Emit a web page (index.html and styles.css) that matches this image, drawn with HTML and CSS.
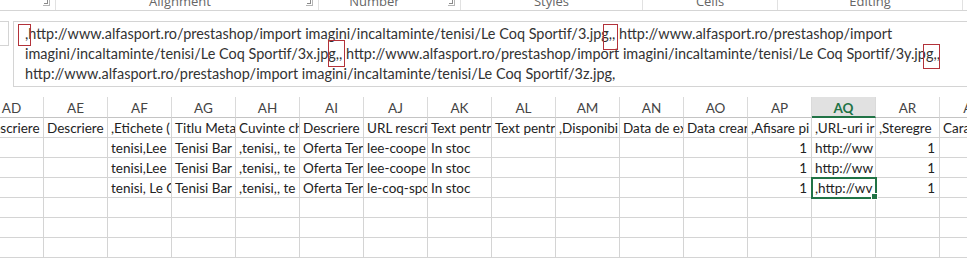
FILE: index.html
```html
<!DOCTYPE html>
<html lang="en">
<head>
  <meta charset="UTF-8">
  <title>Book1 - Excel</title>
  <link rel="stylesheet" href="styles.css">
</head>
<body>
  <div class="ribbon">
    <div class="group g-first"><span class="launcher"></span></div>
    <div class="group g-align"><span class="group-label">Alignment</span><span class="launcher"></span></div>
    <div class="group g-number"><span class="group-label">Number</span><span class="launcher"></span></div>
    <div class="group g-styles"><span class="group-label">Styles</span></div>
    <div class="group g-cells"><span class="group-label">Cells</span></div>
    <div class="group g-editing"><span class="group-label">Editing</span></div>
  </div>

  <div class="formula-row">
    <div class="name-box"></div>
    <div class="formula-bar">
      <div class="formula-text">,http://www.alfasport.ro/prestashop/import imagini/incaltaminte/tenisi/Le Coq Sportif/3.jpg,, http://www.alfasport.ro/prestashop/import<br>imagini/incaltaminte/tenisi/Le Coq Sportif/3x.jpg,, http://www.alfasport.ro/prestashop/import imagini/incaltaminte/tenisi/Le Coq Sportif/3y.jpg,,<br>http://www.alfasport.ro/prestashop/import imagini/incaltaminte/tenisi/Le Coq Sportif/3z.jpg,</div>
      <span class="mark mark-1"></span>
      <span class="mark mark-2"></span>
      <span class="mark mark-3"></span>
      <span class="mark mark-4"></span>
    </div>
  </div>

  <div class="sheet">
    <div class="grid">
      <div class="head">AD</div><div class="head">AE</div><div class="head">AF</div><div class="head">AG</div>
      <div class="head">AH</div><div class="head">AI</div><div class="head">AJ</div><div class="head">AK</div>
      <div class="head">AL</div><div class="head">AM</div><div class="head">AN</div><div class="head">AO</div>
      <div class="head">AP</div><div class="head active">AQ</div><div class="head">AR</div><div class="head">AS</div>

      <div class="cell">Descriere</div><div class="cell">Descriere</div><div class="cell">,Etichete (</div><div class="cell">Titlu Meta</div>
      <div class="cell">Cuvinte ch</div><div class="cell">Descriere</div><div class="cell">URL rescri</div><div class="cell">Text pentr</div>
      <div class="cell">Text pentr</div><div class="cell">,Disponibi</div><div class="cell">Data de ex</div><div class="cell">Data crear</div>
      <div class="cell">,Afisare pi</div><div class="cell">,URL-uri ir</div><div class="cell">,Steregre</div><div class="cell">Cara</div>

      <div class="cell"></div><div class="cell"></div><div class="cell">tenisi,Lee</div><div class="cell">Tenisi Bar</div>
      <div class="cell">,tenisi,, te</div><div class="cell">Oferta Ter</div><div class="cell">lee-coope</div><div class="cell">In stoc</div>
      <div class="cell"></div><div class="cell"></div><div class="cell"></div><div class="cell"></div>
      <div class="cell num">1</div><div class="cell">http://ww</div><div class="cell num">1</div><div class="cell"></div>

      <div class="cell"></div><div class="cell"></div><div class="cell">tenisi,Lee</div><div class="cell">Tenisi Bar</div>
      <div class="cell">,tenisi,, te</div><div class="cell">Oferta Ter</div><div class="cell">lee-coope</div><div class="cell">In stoc</div>
      <div class="cell"></div><div class="cell"></div><div class="cell"></div><div class="cell"></div>
      <div class="cell num">1</div><div class="cell">http://ww</div><div class="cell num">1</div><div class="cell"></div>

      <div class="cell"></div><div class="cell"></div><div class="cell">tenisi, Le C</div><div class="cell">Tenisi Bar</div>
      <div class="cell">,tenisi,, te</div><div class="cell">Oferta Ter</div><div class="cell">le-coq-spo</div><div class="cell">In stoc</div>
      <div class="cell"></div><div class="cell"></div><div class="cell"></div><div class="cell"></div>
      <div class="cell num">1</div><div class="cell selected">,http://wv</div><div class="cell num">1</div><div class="cell"></div>

      <div class="cell"></div><div class="cell"></div><div class="cell"></div><div class="cell"></div>
      <div class="cell"></div><div class="cell"></div><div class="cell"></div><div class="cell"></div>
      <div class="cell"></div><div class="cell"></div><div class="cell"></div><div class="cell"></div>
      <div class="cell"></div><div class="cell"></div><div class="cell"></div><div class="cell"></div>

      <div class="cell"></div><div class="cell"></div><div class="cell"></div><div class="cell"></div>
      <div class="cell"></div><div class="cell"></div><div class="cell"></div><div class="cell"></div>
      <div class="cell"></div><div class="cell"></div><div class="cell"></div><div class="cell"></div>
      <div class="cell"></div><div class="cell"></div><div class="cell"></div><div class="cell"></div>

      <div class="cell"></div><div class="cell"></div><div class="cell"></div><div class="cell"></div>
      <div class="cell"></div><div class="cell"></div><div class="cell"></div><div class="cell"></div>
      <div class="cell"></div><div class="cell"></div><div class="cell"></div><div class="cell"></div>
      <div class="cell"></div><div class="cell"></div><div class="cell"></div><div class="cell"></div>
    </div>
  </div>
</body>
</html>
```

FILE: styles.css
```css
html, body {
  margin: 0;
  padding: 0;
  overflow: hidden;
  background-color: #ffffff;
}

body {
  width: 967px;
  height: 263px;
  font-family: 'Lato', 'Open Sans', sans-serif;
}

/* ribbon, only its bottom edge is visible */
.ribbon {
  display: flex;
  height: 10px;
  border-bottom: 1px solid #d5d5d5;
  overflow: hidden;
  background-color: #ffffff;
}

.group {
  position: relative;
  display: flex;
  justify-content: center;
  border-right: 1px solid #e1e1e1;
  box-sizing: border-box;
  height: 10px;
}

.g-first { width: 56px; }
.g-align { width: 263px; padding-right: 14px; }
.g-number { width: 142px; padding-right: 30px; }
.g-styles { width: 182px; }
.g-cells { width: 135px; }
.g-editing { width: 185px; }

.group-label {
  font-family: 'Open Sans', sans-serif;
  font-size: 13px;
  line-height: 13px;
  margin-top: -5px;
  color: #666666;
  white-space: nowrap;
}

.launcher {
  position: absolute;
  right: 5px;
  top: 0;
  width: 6px;
  height: 5px;
  border-right: 1px solid #b5b5b5;
  border-bottom: 1px solid #b5b5b5;
}

.launcher::after {
  content: '';
  position: absolute;
  right: 1px;
  bottom: 1px;
  width: 3px;
  height: 3px;
  border-right: 1px solid #8a8a8a;
  border-bottom: 1px solid #8a8a8a;
}

/* formula bar */
.formula-row {
  display: flex;
  margin-top: 10px;
}

.name-box {
  width: 9px;
  height: 25px;
  border: 1px solid #d4d4d4;
  border-left: none;
  box-sizing: border-box;
}

.formula-bar {
  position: relative;
  flex: 1;
  height: 66px;
  margin-left: 4px;
  border: 1px solid #d4d4d4;
  border-right: none;
  box-sizing: border-box;
  padding: 2px 0 0 11px;
  overflow: hidden;
}

.formula-text {
  font-family: 'Lato', sans-serif;
  font-size: 14.45px;
  line-height: 20px;
  color: #333333;
  white-space: nowrap;
}

.mark {
  position: absolute;
  border: 1px solid #b3323a;
  box-sizing: border-box;
}

.mark-1 { left: 4px; top: 2px; width: 13px; height: 22px; }
.mark-2 { left: 314px; top: 18px; width: 17px; height: 27px; }
.mark-3 { left: 589px; top: 2px; width: 15px; height: 26px; }
.mark-4 { left: 909px; top: 22px; width: 17px; height: 25px; }

/* worksheet */
.sheet {
  margin-top: 10px;
  margin-left: -20px;
}

.grid {
  display: grid;
  grid-template-columns: repeat(16, 64px);
  grid-template-rows: 21px repeat(7, 20px);
  font-size: 13.5px;
  color: #222222;
}

.head {
  display: flex;
  align-items: center;
  justify-content: center;
  border-right: 1px solid #dadada;
  border-bottom: 1px solid #c4c4c4;
  box-sizing: border-box;
  color: #444444;
  padding-top: 1px;
}

.head.active {
  background-color: #e1e1e1;
  color: #217346;
  font-weight: bold;
  border-bottom: 2px solid #217346;
  padding-top: 2px;
}

.cell {
  position: relative;
  border-right: 1px solid #d4d4d4;
  border-bottom: 1px solid #d4d4d4;
  box-sizing: border-box;
  padding: 1px 0 0 3px;
  line-height: 18px;
  white-space: nowrap;
  overflow: hidden;
}

.cell.num {
  text-align: right;
  padding: 1px 4px 0 0;
}

.cell.selected {
  overflow: visible;
  outline: 2px solid #217346;
  outline-offset: -1px;
  z-index: 1;
}

.cell.selected::after {
  content: '';
  position: absolute;
  right: -3px;
  bottom: -3px;
  width: 5px;
  height: 5px;
  background-color: #217346;
  border: 1px solid #ffffff;
}
```
